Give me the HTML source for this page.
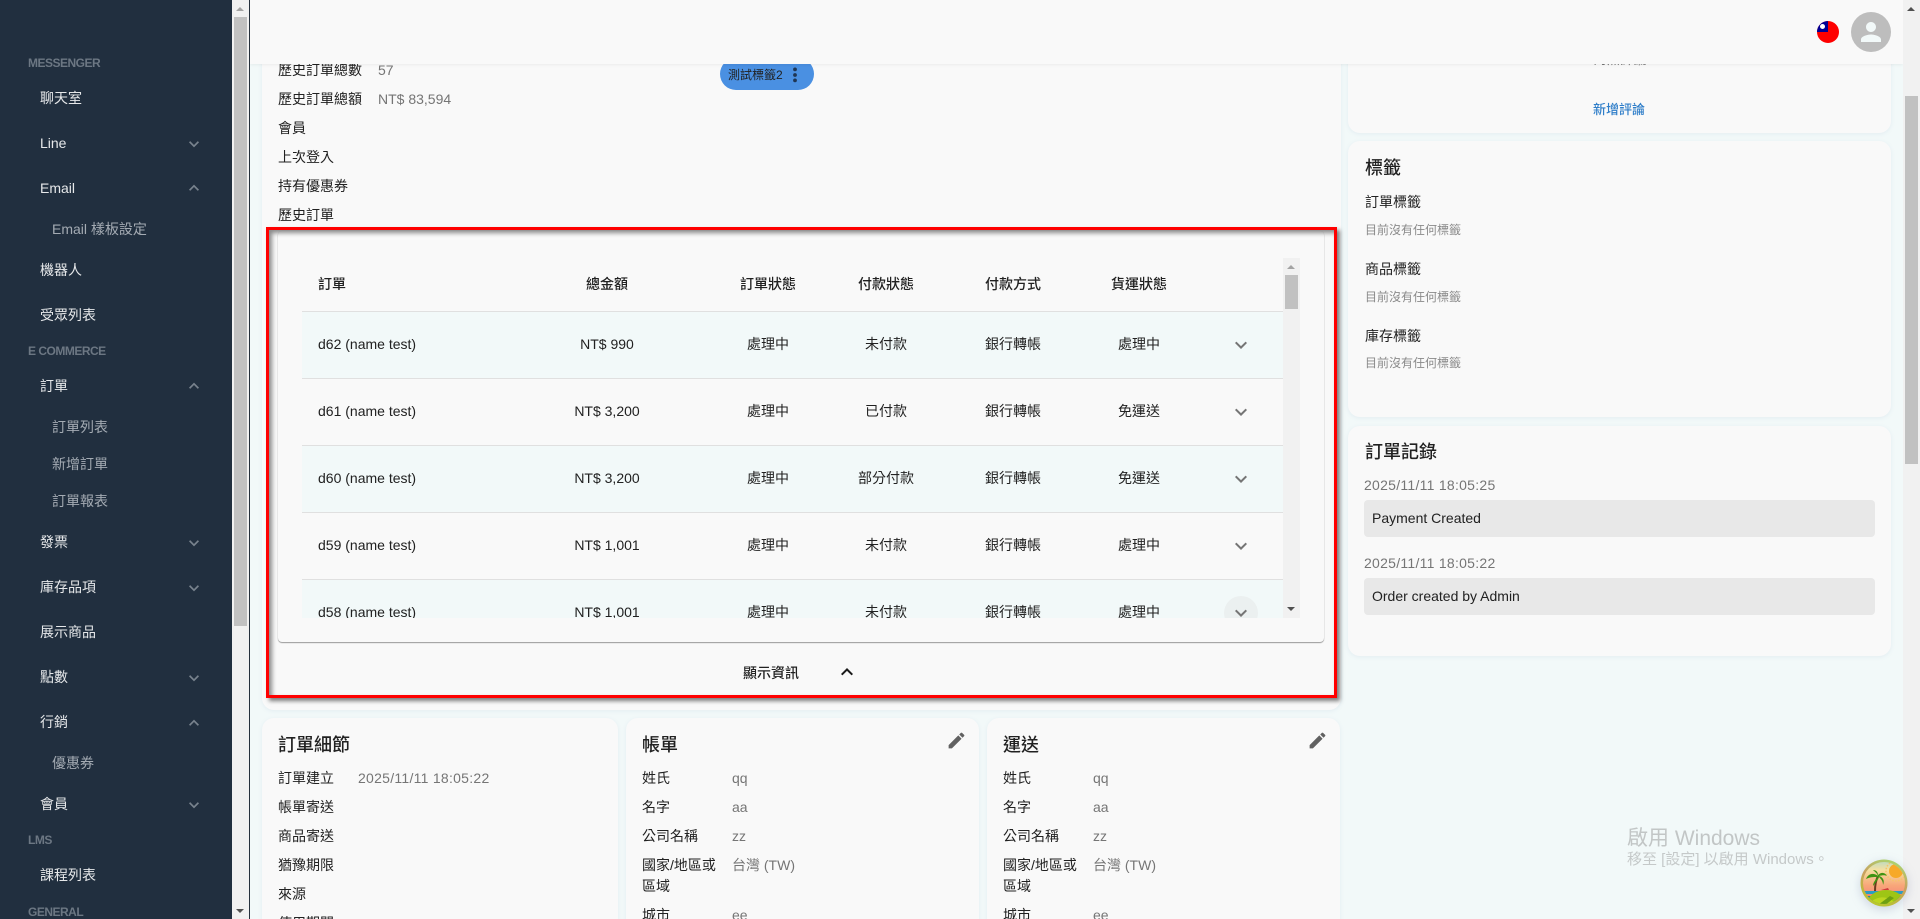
<!DOCTYPE html>
<html lang="zh-Hant">
<head>
<meta charset="utf-8">
<title>訂單</title>
<style>
html,body{margin:0;padding:0;width:1920px;height:919px;overflow:hidden;background:#f2f9f9}
body{position:relative;font-family:"Liberation Sans","Noto Sans CJK TC",sans-serif;font-size:14px;color:#212121}
.a{position:absolute}
.t{position:absolute;line-height:20px;white-space:nowrap}
.c{transform:translateX(-50%)}
.g{color:#757575}
.d{letter-spacing:.27px}
.n{font-size:12px;color:#8a8a8a}
.card{position:absolute;background:#f9f9f9;border-radius:12px;box-shadow:0 1px 4px rgba(120,150,190,.12)}
.title{position:absolute;font-size:18px;line-height:24px;font-weight:500;white-space:nowrap;color:#212121}
#side{left:0;top:0;width:232px;height:919px;background:#212f3f;overflow:hidden}
#side .m{position:absolute;left:40px;line-height:20px;color:#e6e8ea;white-space:nowrap}
#side .s{position:absolute;left:52px;line-height:20px;color:#a4abb3;white-space:nowrap}
#side .h{position:absolute;left:28px;line-height:16px;font-size:12px;font-weight:700;letter-spacing:-.5px;color:#6c7783;white-space:nowrap}
#side svg{position:absolute;left:184px;width:20px;height:20px;fill:#78828d}
.sb{position:absolute;background:#f1f1f1;width:17px}
.th{position:absolute;background:#c1c1c1;width:13px}
.up,.dn{position:absolute;width:0;height:0;border-left:4px solid transparent;border-right:4px solid transparent}
.up{border-bottom:4px solid #505050}
.dn{border-top:4px solid #505050}
.row{position:absolute;left:302px;width:981px;height:67px;box-sizing:border-box;border-top:1px solid #e0e0e0;background:#f9f9f9}
.row.e{background:#f2f9f9}
.chev{position:absolute;left:1229px;width:24px;height:24px;fill:#757575}
.pen{position:absolute;width:21px;height:21px;fill:#616161}
</style>
</head>
<body>

<!-- main cards -->
<div class="card" style="left:262px;top:20px;width:1079px;height:690px"></div>
<div class="card" style="left:1348px;top:20px;width:543px;height:113px"></div>
<div class="t g" style="left:1593px;top:50px;font-size:13.5px">尚無評論</div>
<div class="t" style="left:1619px;top:100px;font-size:13px;font-weight:500;color:#2f7ec9;transform:translateX(-50%)">新增評論</div>

<div class="t" style="left:278px;top:60px">歷史訂單總數</div><div class="t g" style="left:378px;top:60px">57</div>
<div class="t" style="left:278px;top:89px">歷史訂單總額</div><div class="t g" style="left:378px;top:89px">NT$ 83,594</div>
<div class="t" style="left:278px;top:118px">會員</div>
<div class="t" style="left:278px;top:147px">上次登入</div>
<div class="t" style="left:278px;top:176px">持有優惠券</div>
<div class="t" style="left:278px;top:205px">歷史訂單</div>

<!-- chip -->
<div class="a" style="left:720px;top:58px;width:94px;height:32px;border-radius:16px;background:#4a90e2"></div>
<div class="t" style="left:728px;top:65px;font-size:12px">測試標籤2</div>
<svg class="a" style="left:787px;top:67px" width="16" height="16" viewBox="0 0 16 16" fill="#1f3654"><circle cx="8" cy="2.4" r="1.9"/><circle cx="8" cy="8" r="1.9"/><circle cx="8" cy="13.4" r="1.9"/></svg>

<!-- accordion paper -->
<div class="a" style="left:278px;top:231px;width:1046px;height:411px;background:#f9f9f9;border-radius:4px;box-shadow:0 1px 1px rgba(0,0,0,.38),0 0 1px rgba(0,0,0,.1)"></div>

<!-- table -->
<div class="a" style="left:302px;top:258px;width:981px;height:360px;overflow:hidden">
<div class="a" style="left:-302px;top:-258px;width:1920px;height:919px">
<div class="t" style="left:318px;top:274px;font-weight:500">訂單</div>
<div class="t c" style="left:607px;top:274px;font-weight:500">總金額</div>
<div class="t c" style="left:768px;top:274px;font-weight:500">訂單狀態</div>
<div class="t c" style="left:886px;top:274px;font-weight:500">付款狀態</div>
<div class="t c" style="left:1013px;top:274px;font-weight:500">付款方式</div>
<div class="t c" style="left:1139px;top:274px;font-weight:500">貨運狀態</div>

<div class="row e" style="top:311px"></div>
<div class="row" style="top:378px"></div>
<div class="row e" style="top:445px"></div>
<div class="row" style="top:512px"></div>
<div class="row e" style="top:579px"></div>
<div class="a" style="left:1224px;top:596px;width:34px;height:34px;border-radius:50%;background:#ebf0f0"></div>

<div class="t" style="left:318px;top:334px">d62 (name test)</div><div class="t c" style="left:607px;top:334px">NT$ 990</div><div class="t c" style="left:768px;top:334px">處理中</div><div class="t c" style="left:886px;top:334px">未付款</div><div class="t c" style="left:1013px;top:334px">銀行轉帳</div><div class="t c" style="left:1139px;top:334px">處理中</div>
<svg class="chev" style="top:333px" viewBox="0 0 24 24"><path d="M16.59 8.59 12 13.17 7.41 8.59 6 10l6 6 6-6z"/></svg>

<div class="t" style="left:318px;top:401px">d61 (name test)</div><div class="t c" style="left:607px;top:401px">NT$ 3,200</div><div class="t c" style="left:768px;top:401px">處理中</div><div class="t c" style="left:886px;top:401px">已付款</div><div class="t c" style="left:1013px;top:401px">銀行轉帳</div><div class="t c" style="left:1139px;top:401px">免運送</div>
<svg class="chev" style="top:400px" viewBox="0 0 24 24"><path d="M16.59 8.59 12 13.17 7.41 8.59 6 10l6 6 6-6z"/></svg>

<div class="t" style="left:318px;top:468px">d60 (name test)</div><div class="t c" style="left:607px;top:468px">NT$ 3,200</div><div class="t c" style="left:768px;top:468px">處理中</div><div class="t c" style="left:886px;top:468px">部分付款</div><div class="t c" style="left:1013px;top:468px">銀行轉帳</div><div class="t c" style="left:1139px;top:468px">免運送</div>
<svg class="chev" style="top:467px" viewBox="0 0 24 24"><path d="M16.59 8.59 12 13.17 7.41 8.59 6 10l6 6 6-6z"/></svg>

<div class="t" style="left:318px;top:535px">d59 (name test)</div><div class="t c" style="left:607px;top:535px">NT$ 1,001</div><div class="t c" style="left:768px;top:535px">處理中</div><div class="t c" style="left:886px;top:535px">未付款</div><div class="t c" style="left:1013px;top:535px">銀行轉帳</div><div class="t c" style="left:1139px;top:535px">處理中</div>
<svg class="chev" style="top:534px" viewBox="0 0 24 24"><path d="M16.59 8.59 12 13.17 7.41 8.59 6 10l6 6 6-6z"/></svg>

<div class="t" style="left:318px;top:602px">d58 (name test)</div><div class="t c" style="left:607px;top:602px">NT$ 1,001</div><div class="t c" style="left:768px;top:602px">處理中</div><div class="t c" style="left:886px;top:602px">未付款</div><div class="t c" style="left:1013px;top:602px">銀行轉帳</div><div class="t c" style="left:1139px;top:602px">處理中</div>
<svg class="chev" style="top:601px" viewBox="0 0 24 24"><path d="M16.59 8.59 12 13.17 7.41 8.59 6 10l6 6 6-6z"/></svg>
</div>
</div>

<!-- table scrollbar -->
<div class="sb" style="left:1283px;top:258px;height:360px"></div>
<div class="th" style="left:1285px;top:275px;height:34px"></div>
<div class="up" style="left:1287px;top:265px;border-bottom-color:#a3a3a3"></div>
<div class="dn" style="left:1287px;top:607px"></div>

<div class="t c" style="left:771px;top:663px;font-weight:500">顯示資訊</div>
<svg class="a" style="left:835px;top:660px" width="24" height="24" viewBox="0 0 24 24" fill="#1a1a1a"><path d="m12 8-6 6 1.41 1.41L12 10.83l4.59 4.58L18 14z"/></svg>

<!-- red annotation frame -->
<div class="a" style="left:266px;top:227px;width:1071px;height:471px;box-sizing:border-box;border:3.5px solid #ff0000;box-shadow:3px 3px 4px rgba(0,0,0,.5),inset 3px 3px 5px rgba(0,0,0,.45)"></div>

<!-- bottom cards -->
<div class="card" style="left:262px;top:718px;width:356px;height:240px"></div>
<div class="card" style="left:626px;top:718px;width:353px;height:240px"></div>
<div class="card" style="left:987px;top:718px;width:353px;height:240px"></div>

<div class="title" style="left:278px;top:733px">訂單細節</div>
<div class="t" style="left:278px;top:768px">訂單建立</div><div class="t g d" style="left:358px;top:768px">2025/11/11 18:05:22</div>
<div class="t" style="left:278px;top:797px">帳單寄送</div>
<div class="t" style="left:278px;top:826px">商品寄送</div>
<div class="t" style="left:278px;top:855px">猶豫期限</div>
<div class="t" style="left:278px;top:884px">來源</div>
<div class="t" style="left:278px;top:913px">使用期間</div>

<div class="title" style="left:642px;top:733px">帳單</div>
<svg class="pen" style="left:946px;top:730px" viewBox="0 0 24 24"><path d="M3 17.25V21h3.75L17.81 9.94l-3.75-3.75zM20.71 7.04c.39-.39.39-1.02 0-1.41l-2.34-2.34a.996.996 0 0 0-1.41 0l-1.83 1.83 3.75 3.75z"/></svg>
<div class="t" style="left:642px;top:768px">姓氏</div><div class="t g" style="left:732px;top:768px">qq</div>
<div class="t" style="left:642px;top:797px">名字</div><div class="t g" style="left:732px;top:797px">aa</div>
<div class="t" style="left:642px;top:826px">公司名稱</div><div class="t g" style="left:732px;top:826px">zz</div>
<div class="t" style="left:642px;top:855px">國家/地區或</div><div class="t g" style="left:732px;top:855px">台灣 (TW)</div>
<div class="t" style="left:642px;top:876px">區域</div>
<div class="t" style="left:642px;top:905px">城市</div><div class="t g" style="left:732px;top:905px">ee</div>

<div class="title" style="left:1003px;top:733px">運送</div>
<svg class="pen" style="left:1307px;top:730px" viewBox="0 0 24 24"><path d="M3 17.25V21h3.75L17.81 9.94l-3.75-3.75zM20.71 7.04c.39-.39.39-1.02 0-1.41l-2.34-2.34a.996.996 0 0 0-1.41 0l-1.83 1.83 3.75 3.75z"/></svg>
<div class="t" style="left:1003px;top:768px">姓氏</div><div class="t g" style="left:1093px;top:768px">qq</div>
<div class="t" style="left:1003px;top:797px">名字</div><div class="t g" style="left:1093px;top:797px">aa</div>
<div class="t" style="left:1003px;top:826px">公司名稱</div><div class="t g" style="left:1093px;top:826px">zz</div>
<div class="t" style="left:1003px;top:855px">國家/地區或</div><div class="t g" style="left:1093px;top:855px">台灣 (TW)</div>
<div class="t" style="left:1003px;top:876px">區域</div>
<div class="t" style="left:1003px;top:905px">城市</div><div class="t g" style="left:1093px;top:905px">ee</div>

<!-- right column -->
<div class="card" style="left:1348px;top:141px;width:543px;height:276px"></div>
<div class="title" style="left:1365px;top:156px">標籤</div>
<div class="t" style="left:1365px;top:192px">訂單標籤</div>
<div class="t n" style="left:1365px;top:220px">目前沒有任何標籤</div>
<div class="t" style="left:1365px;top:259px">商品標籤</div>
<div class="t n" style="left:1365px;top:287px">目前沒有任何標籤</div>
<div class="t" style="left:1365px;top:326px">庫存標籤</div>
<div class="t n" style="left:1365px;top:353px">目前沒有任何標籤</div>

<div class="card" style="left:1348px;top:426px;width:543px;height:230px"></div>
<div class="title" style="left:1365px;top:440px">訂單記錄</div>
<div class="t g d" style="left:1364px;top:475px">2025/11/11 18:05:25</div>
<div class="a" style="left:1364px;top:500px;width:511px;height:37px;background:#e8e8e8;border-radius:4px"></div>
<div class="t" style="left:1372px;top:508px">Payment Created</div>
<div class="t g d" style="left:1364px;top:553px">2025/11/11 18:05:22</div>
<div class="a" style="left:1364px;top:578px;width:511px;height:37px;background:#e8e8e8;border-radius:4px"></div>
<div class="t" style="left:1372px;top:586px">Order created by Admin</div>

<!-- header -->
<div class="a" style="left:250px;top:0;width:1653px;height:64px;background:#f9f9f9;box-shadow:0 1px 3px rgba(0,0,0,.06)"></div>
<div class="a" style="left:1817px;top:21px;width:22px;height:22px;border-radius:50%;overflow:hidden;background:#fe0000">
  <div class="a" style="left:0;top:0;width:11px;height:11px;background:#000095"></div>
  <div class="a" style="left:3px;top:3px;width:5px;height:5px;background:#fff;border-radius:50%"></div>
</div>
<div class="a" style="left:1851px;top:12px;width:40px;height:40px;border-radius:50%;background:#bdbdbd"></div>
<svg class="a" style="left:1856px;top:17px" width="30" height="30" viewBox="0 0 24 24" fill="#f2f9f9"><path d="M12 12c2.21 0 4-1.79 4-4s-1.79-4-4-4-4 1.79-4 4 1.79 4 4 4m0 2c-2.67 0-8 1.34-8 4v2h16v-2c0-2.66-5.33-4-8-4"/></svg>

<!-- sidebar -->
<div class="a" id="side">
  <div class="h" style="top:55px">MESSENGER</div>
  <div class="m" style="top:88px">聊天室</div>
  <div class="m" style="top:133px">Line</div>
  <svg style="top:134px" viewBox="0 0 24 24"><path d="M16.59 8.59 12 13.17 7.41 8.59 6 10l6 6 6-6z"/></svg>
  <div class="m" style="top:178px">Email</div>
  <svg style="top:178px" viewBox="0 0 24 24"><path d="m12 8-6 6 1.41 1.41L12 10.83l4.59 4.58L18 14z"/></svg>
  <div class="s" style="top:219px">Email 樣板設定</div>
  <div class="m" style="top:260px">機器人</div>
  <div class="m" style="top:305px">受眾列表</div>
  <div class="h" style="top:343px">E COMMERCE</div>
  <div class="m" style="top:376px">訂單</div>
  <svg style="top:376px" viewBox="0 0 24 24"><path d="m12 8-6 6 1.41 1.41L12 10.83l4.59 4.58L18 14z"/></svg>
  <div class="s" style="top:417px">訂單列表</div>
  <div class="s" style="top:454px">新增訂單</div>
  <div class="s" style="top:491px">訂單報表</div>
  <div class="m" style="top:532px">發票</div>
  <svg style="top:533px" viewBox="0 0 24 24"><path d="M16.59 8.59 12 13.17 7.41 8.59 6 10l6 6 6-6z"/></svg>
  <div class="m" style="top:577px">庫存品項</div>
  <svg style="top:578px" viewBox="0 0 24 24"><path d="M16.59 8.59 12 13.17 7.41 8.59 6 10l6 6 6-6z"/></svg>
  <div class="m" style="top:622px">展示商品</div>
  <div class="m" style="top:667px">點數</div>
  <svg style="top:668px" viewBox="0 0 24 24"><path d="M16.59 8.59 12 13.17 7.41 8.59 6 10l6 6 6-6z"/></svg>
  <div class="m" style="top:712px">行銷</div>
  <svg style="top:713px" viewBox="0 0 24 24"><path d="m12 8-6 6 1.41 1.41L12 10.83l4.59 4.58L18 14z"/></svg>
  <div class="s" style="top:753px">優惠券</div>
  <div class="m" style="top:794px">會員</div>
  <svg style="top:795px" viewBox="0 0 24 24"><path d="M16.59 8.59 12 13.17 7.41 8.59 6 10l6 6 6-6z"/></svg>
  <div class="h" style="top:832px">LMS</div>
  <div class="m" style="top:865px">課程列表</div>
  <div class="h" style="top:904px">GENERAL</div>
</div>

<!-- sidebar scrollbar -->
<div class="sb" style="left:232px;top:0;height:919px"></div>
<div class="th" style="left:234px;top:17px;height:609px"></div>
<div class="up" style="left:236px;top:7px;border-bottom-color:#a3a3a3"></div>
<div class="dn" style="left:236px;top:909px"></div>
<div class="a" style="left:249px;top:0;width:1px;height:919px;background:#25303c"></div>

<!-- page scrollbar -->
<div class="sb" style="left:1903px;top:0;height:919px"></div>
<div class="th" style="left:1905px;top:96px;height:368px"></div>
<div class="up" style="left:1907px;top:7px"></div>
<div class="dn" style="left:1907px;top:909px"></div>

<!-- windows watermark -->
<div class="t" style="left:1627px;top:827px;font-size:21px;line-height:24px;color:#c2c6c6">啟用 Windows</div>
<div class="t" style="left:1627px;top:850px;font-size:15px;color:#c5c9c9">移至 [設定] 以啟用 Windows。</div>

<!-- floating logo -->
<svg class="a" style="left:1858px;top:857px;filter:drop-shadow(0 3px 5px rgba(120,130,170,.3))" width="52" height="52" viewBox="0 0 52 52">
  <defs>
    <clipPath id="cp"><circle cx="26" cy="26" r="21"/></clipPath>
    <linearGradient id="ring" x1="0.7" y1="0" x2="0.3" y2="1">
      <stop offset="0" stop-color="#a9d66f"/><stop offset=".45" stop-color="#c9a060"/><stop offset="1" stop-color="#b7c92a"/>
    </linearGradient>
    <linearGradient id="sky" x1="0" y1="0" x2="0" y2="1">
      <stop offset="0" stop-color="#a6d9d0"/><stop offset=".25" stop-color="#f5e0a0"/><stop offset=".55" stop-color="#f8a679"/><stop offset=".72" stop-color="#f58f7b"/>
    </linearGradient>
  </defs>
  <circle cx="26" cy="26" r="23.5" fill="url(#ring)"/>
  <g clip-path="url(#cp)">
    <rect x="0" y="0" width="52" height="52" fill="url(#sky)"/>
    <circle cx="38" cy="14" r="7" fill="#f7a928"/>
    <circle cx="38" cy="14" r="10" fill="none" stroke="#f6c269" stroke-width="1.5" stroke-dasharray="1.5 1.5"/>
    <rect x="0" y="34" width="52" height="3" fill="#2a9dc4"/>
    <rect x="0" y="37" width="52" height="2" fill="#f08a66"/>
    <rect x="0" y="39" width="52" height="8" fill="#1d84ad"/>
    <path d="M23 33 L30 31 L31 33 Z" fill="#d13b3b"/>
    <path d="M17 34 C17 28 18 23 20 19" fill="none" stroke="#6d3a1e" stroke-width="2"/>
    <path d="M20 19 C15 15 10 17 8 22 C12 20 15 20 20 20 C17 23 15 26 15 29 C18 25 20 23 21 20 C24 23 25 25 25 28 C27 24 25 20 21 19 C25 18 27 18 29 19 C27 15 23 15 20 18 C20 15 18 13 15 13 C17 15 19 16 20 19 Z" fill="#3f9413"/>
    <ellipse cx="28" cy="47" rx="19" ry="14" fill="#9ec515"/>
    <path d="M14 44 C22 38 32 40 37 46 L37 50 L14 50 Z" fill="#bcd61f"/>
    <path d="M20 48 L32 39 L36 41 L26 49 Z" fill="#6d9f12"/>
  </g>
</svg>

</body>
</html>
